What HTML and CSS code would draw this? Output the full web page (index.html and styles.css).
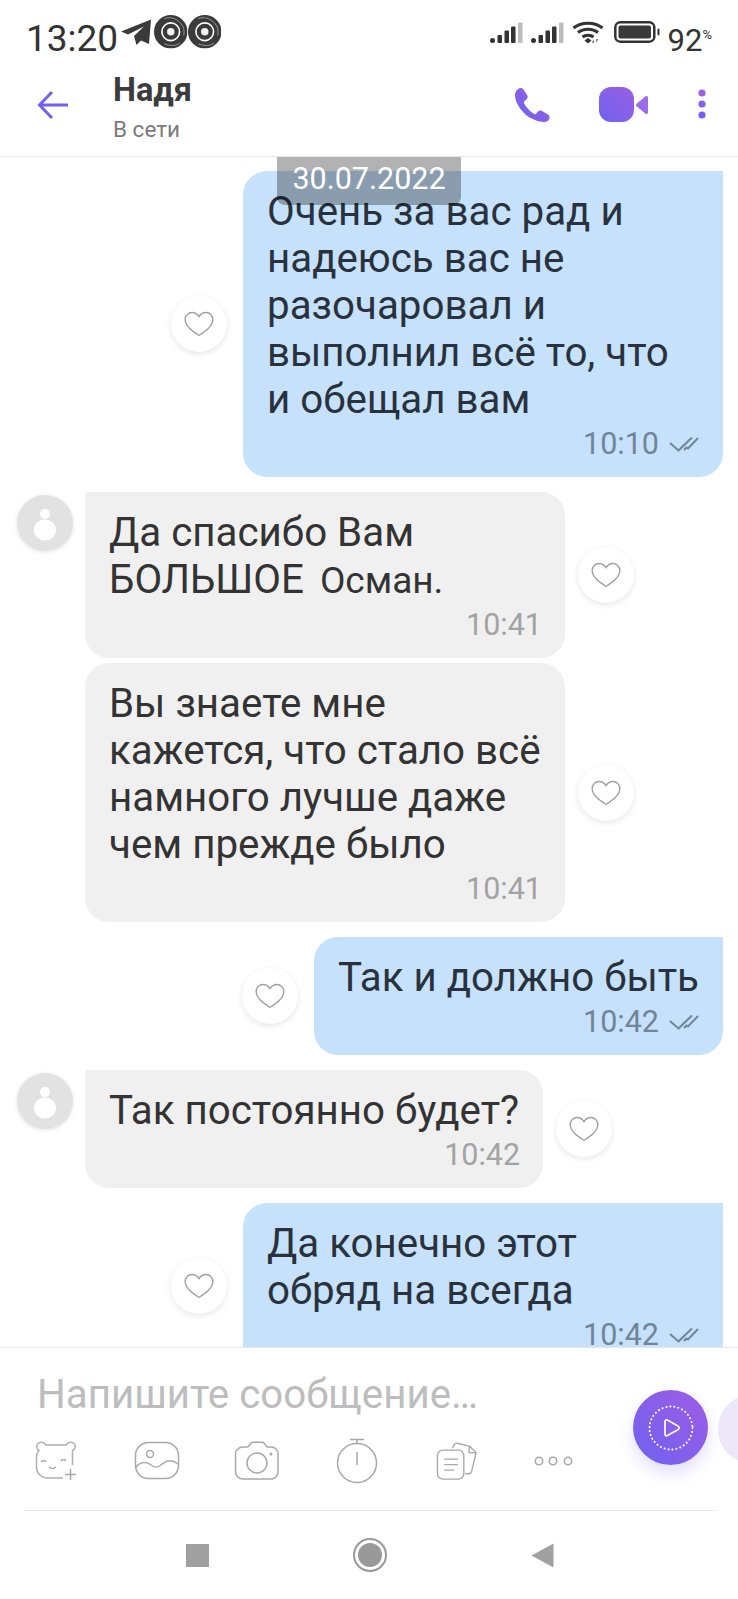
FILE: index.html
```html
<!DOCTYPE html>
<html lang="ru">
<head>
<meta charset="utf-8">
<title>Надя</title>
<link rel="stylesheet" href="styles.css">
</head>
<body>
<svg class="defs" width="0" height="0" aria-hidden="true">
  <defs>
    <linearGradient id="vio" x1="0" y1="1" x2="1" y2="0">
      <stop offset="0" stop-color="#6f62f0"/>
      <stop offset="1" stop-color="#9a5fe2"/>
    </linearGradient>
    <symbol id="heart" viewBox="0 0 30 26">
      <path d="M15 24.500C9 20.500 1.200 15.600 1.200 8.600 1.200 4.400 4.400 1.500 8 1.500c3 0 5.500 1.600 7 4.200 1.500-2.600 4-4.200 7-4.200 3.600 0 6.800 2.900 6.800 7.100C28.800 15.600 21 20.500 15 24.500Z" fill="none" stroke="#a0a0a0" stroke-width="1.400"/>
    </symbol>
    <symbol id="checks" viewBox="0 0 30 16">
      <path d="M1 7 9.500 14.500 15.500 8.500M9.500 14.500 23 1.500M15 14 17.500 11.500 19 12.500 29 2" fill="none" stroke="currentColor" stroke-width="2"/>
    </symbol>
    <symbol id="person" viewBox="0 0 56 56">
      <circle cx="28" cy="19" r="5" fill="#fff"/>
      <ellipse cx="28" cy="35" rx="11" ry="10.500" fill="#fff"/>
    </symbol>
    <symbol id="bars" viewBox="0 0 33 22">
      <circle cx="2.500" cy="18.500" r="2.500" fill="#333"/>
      <rect x="7.500" y="13" width="4.500" height="8" rx="1" fill="#333"/>
      <rect x="14.500" y="8.500" width="4.500" height="12.500" rx="1" fill="#333"/>
      <rect x="21" y="4.500" width="4.500" height="16.500" rx="1" fill="#333"/>
      <rect x="28" y="0.500" width="4.500" height="20.500" rx="1" fill="#bdbdbd"/>
    </symbol>
    <symbol id="ring" viewBox="0 0 36 36">
      <circle cx="18" cy="18" r="18" fill="#3a3a3a"/>
      <circle cx="18" cy="18" r="9.500" fill="none" stroke="#fff" stroke-width="1.800"/>
      <circle cx="18" cy="18" r="4" fill="#f2f2f2"/>
      <path d="M11 4c7-3 15 0 20 8 1.500 3 1.500 7 1 10M28 30c-5 4-12 3-17 1" fill="none" stroke="#b8b8b8" stroke-width="0.800"/>
    </symbol>
  </defs>
</svg>

<div class="phone">
  <div class="statusbar">
    <div class="status-left">
      <span class="clock">13:20</span>
      <svg class="tg" viewBox="0 0 32 28"><path d="M1 12.500 31 0.500 29 25 21 21.500 16.500 26 14 17 24 7.500 8 15.500Z" fill="#3a3a3a"/></svg>
      <svg class="ring"><use href="#ring"/></svg>
      <svg class="ring"><use href="#ring"/></svg>
    </div>
    <div class="status-right">
      <svg class="bars"><use href="#bars"/></svg>
      <svg class="bars"><use href="#bars"/></svg>
      <svg class="wifi" viewBox="0 0 32 24">
        <path d="M1.500 8C9 1.500 23 1.500 30.500 8M6 12.500c5.500-4.500 14.500-4.500 20 0M10.500 17c3-2.500 8-2.500 11 0" fill="none" stroke="#333" stroke-width="3"/>
        <path d="M12.500 20.500 16 18l3.500 2.500-3.500 3Z" fill="#333"/>
        <path d="M22 23v-4l-2.500 4ZM24 19v4l2.500-4Z" fill="#888"/>
      </svg>
      <svg class="battery" viewBox="0 0 46 22">
        <rect x="1.300" y="1.300" width="39" height="19.400" rx="5" fill="none" stroke="#333" stroke-width="2.500"/>
        <rect x="4.500" y="4.500" width="32.500" height="13" rx="2" fill="#3a3a3a"/>
        <rect x="43.500" y="7.500" width="2" height="7" rx="1" fill="#333"/>
      </svg>
      <span class="pct">92<small class="pct-sign">%</small></span>
    </div>
  </div>

  <header class="topbar">
    <svg class="back" viewBox="0 0 32 30"><path d="M31 15H3M15 2 2.500 15 15 28" fill="none" stroke="#7360f2" stroke-width="3"/></svg>
    <div class="contact">
      <div class="name">Надя</div>
      <div class="presence">В сети</div>
    </div>
    <svg class="phone-ic" viewBox="0 0 36 36"><path d="M5 1.500C3 2.500 1 4.500 1 8c0 6 4 13 9.500 18.500S25 35 30 35c3 0 5-1.500 5.500-4 .3-1.500-.3-2.800-1.500-3.500l-6-3.500c-1.500-.8-3-.5-4 .6l-1.800 2c-.6.6-1.300.7-2 .3-2.500-1.400-4.700-3.300-6.500-5.300-1.500-1.800-2.800-3.700-3.700-5.700-.3-.8 0-1.400.6-1.900l2-1.800c1.100-1 1.400-2.500.7-4L10.500 4C9.500 1.500 7 .5 5 1.500Z" fill="url(#vio)"/></svg>
    <svg class="video-ic" viewBox="0 0 50 36"><rect x="0" y="0" width="35" height="35" rx="12" fill="url(#vio)"/><path d="M38.500 18 47.500 10.500V25.500Z" fill="#9a6ce8" stroke="#9a6ce8" stroke-width="3" stroke-linejoin="round"/></svg>
    <svg class="more-ic" viewBox="0 0 8 30"><circle cx="4" cy="4" r="3.600" fill="#9a5fe2"/><circle cx="4" cy="15" r="3.600" fill="#7f60ec"/><circle cx="4" cy="26" r="3.600" fill="#7360f2"/></svg>
  </header>

  <main class="chat">
    <div class="date-badge">30.07.2022</div>

    <div class="row row-out">
      <span class="like like-out"><svg class="heart"><use href="#heart"/></svg></span>
      <div class="bubble bubble-out bubble-wide">
        <p class="text">Очень за вас рад и<br>надеюсь вас не<br>разочаровал и<br>выполнил всё то, что<br>и обещал вам</p>
        <div class="meta"><span>10:10</span><svg class="check"><use href="#checks"/></svg></div>
      </div>
    </div>

    <div class="row row-in gap-15">
      <span class="avatar"><svg class="person"><use href="#person"/></svg></span>
      <div class="bubble bubble-in bubble-wide bubble-first">
        <p class="text">Да спасибо Вам<br>БОЛЬШОЕ&nbsp;<span class="small-word">Осман.</span></p>
        <div class="meta"><span>10:41</span></div>
      </div>
      <span class="like like-in"><svg class="heart"><use href="#heart"/></svg></span>
    </div>

    <div class="row row-in gap-5">
      <span class="avatar avatar-empty"></span>
      <div class="bubble bubble-in bubble-wide">
        <p class="text">Вы знаете мне<br>кажется, что стало всё<br>намного лучше даже<br>чем прежде было</p>
        <div class="meta"><span>10:41</span></div>
      </div>
      <span class="like like-in"><svg class="heart"><use href="#heart"/></svg></span>
    </div>

    <div class="row row-out gap-15">
      <span class="like like-out"><svg class="heart"><use href="#heart"/></svg></span>
      <div class="bubble bubble-out">
        <p class="text">Так и должно быть</p>
        <div class="meta"><span>10:42</span><svg class="check"><use href="#checks"/></svg></div>
      </div>
    </div>

    <div class="row row-in gap-15">
      <span class="avatar"><svg class="person"><use href="#person"/></svg></span>
      <div class="bubble bubble-in bubble-first">
        <p class="text">Так постоянно будет?</p>
        <div class="meta"><span>10:42</span></div>
      </div>
      <span class="like like-in"><svg class="heart"><use href="#heart"/></svg></span>
    </div>

    <div class="row row-out gap-15">
      <span class="like like-out"><svg class="heart"><use href="#heart"/></svg></span>
      <div class="bubble bubble-out bubble-wide">
        <p class="text">Да конечно этот<br>обряд на всегда</p>
        <div class="meta"><span>10:42</span><svg class="check"><use href="#checks"/></svg></div>
      </div>
    </div>
  </main>

  <footer class="composer">
    <div class="placeholder">Напишите сообщение…</div>
    <div class="tools">
      <svg class="tool" viewBox="0 0 46 40">
        <path d="M38.500 24V9.500C41.500 8 42 5 40.500 3 38 0 34 1 32 4H12C10 1 6 0 3.500 3 2 5 2.500 8 5 9.500 3.500 11 2.500 13 2.500 15V26C2.500 32 7 37 14 37H29" fill="none" stroke="#b0b0b0" stroke-width="1.500"/>
        <path d="M7 21c1-2 4-2 5 0M27 20c1-2 4-2 5 0M15 26c2 2 5 2 7 0M36.500 28v11M31 33.500h11" fill="none" stroke="#a8a8a8" stroke-width="1.500"/>
      </svg>
      <svg class="tool" viewBox="0 0 46 40">
        <rect x="1.500" y="1.500" width="43" height="36" rx="13" fill="none" stroke="#a8a8a8" stroke-width="1.500"/>
        <circle cx="16" cy="13" r="3.500" fill="none" stroke="#a8a8a8" stroke-width="1.500"/>
        <path d="M2 26c4-5 10-6 15-2 4 3 7 3 11-1 5-4 11-4 16 0" fill="none" stroke="#a8a8a8" stroke-width="1.500"/>
      </svg>
      <svg class="tool" viewBox="0 0 46 40">
        <path d="M9 6h5l3-4c.5-.6 1-.8 2-.8h9c1 0 1.500.2 2 .8l3 4h4c4 0 7 3 7 7v18c0 4-3 7-7 7H9c-4 0-7.500-3-7.500-7V13C1.500 9 5 6 9 6Z" fill="none" stroke="#a8a8a8" stroke-width="1.500"/>
        <circle cx="23" cy="22" r="10" fill="none" stroke="#a8a8a8" stroke-width="1.500"/>
        <circle cx="37" cy="13" r="1.500" fill="#a8a8a8"/>
      </svg>
      <svg class="tool tool-timer" viewBox="0 0 46 46">
        <circle cx="23" cy="25" r="19.500" fill="none" stroke="#a8a8a8" stroke-width="1.500"/>
        <path d="M16 1.500h14M23 1.500v4M23 14v13" fill="none" stroke="#a8a8a8" stroke-width="1.500"/>
      </svg>
      <svg class="tool" viewBox="0 0 46 44">
        <rect x="1.500" y="10" width="29" height="32" rx="6" fill="none" stroke="#a8a8a8" stroke-width="1.500"/>
        <path d="M9 20h15M9 26h15M9 32h11" fill="none" stroke="#a8a8a8" stroke-width="1.500"/>
        <path d="M18 8l2-4c.8-1.500 2-2 3.500-1.500L37 6l7 6.500-5 21c-.4 1.500-1.500 2.500-3 2.500h-4M37 6l-1 6c0 .7.5 1 1 1l7-.5" fill="none" stroke="#a8a8a8" stroke-width="1.500"/>
      </svg>
      <svg class="tool tool-dots" viewBox="0 0 40 12">
        <circle cx="5" cy="6" r="3.700" fill="none" stroke="#a8a8a8" stroke-width="1.500"/>
        <circle cx="19" cy="6" r="3.700" fill="none" stroke="#a8a8a8" stroke-width="1.500"/>
        <circle cx="34" cy="6" r="3.700" fill="none" stroke="#a8a8a8" stroke-width="1.500"/>
      </svg>
    </div>
    <div class="send">
      <svg class="send-ic" viewBox="0 0 46 46">
        <circle cx="23" cy="23" r="21.500" fill="none" stroke="#fff" stroke-width="2" stroke-dasharray="0.100 3.900" stroke-linecap="round"/>
        <path d="M17 16.500c0-1.300 1.200-2 2.300-1.400l11 6.200c1.200.7 1.200 2.400 0 3.100l-11 6.200c-1.100.6-2.300-.1-2.300-1.400Z" fill="none" stroke="#fff" stroke-width="1.700"/>
      </svg>
    </div>
    <div class="send-ghost"></div>
  </footer>

  <nav class="navbar">
    <span class="nav-square"></span>
    <span class="nav-home"><span class="nav-home-dot"></span></span>
    <svg class="nav-back" viewBox="0 0 23 25"><path d="M22.500 0.500V24.500L0.500 12.500Z" fill="#a0a0a0"/></svg>
  </nav>
</div>
</body>
</html>
```
FILE: styles.css
```css
* { box-sizing: border-box; }
html, body { margin: 0; padding: 0; background: #fff; }
body { font-family: Roboto, "Liberation Sans", sans-serif; color: #333; }
.defs { position: absolute; }
.phone { width: 738px; height: 1599px; display: flex; flex-direction: column; overflow: hidden; }

/* status bar */
.statusbar { height: 70px; display: flex; justify-content: space-between; padding: 0 26px; flex: none; }
.status-left { display: flex; align-items: flex-start; }
.clock { font-size: 37px; line-height: 42px; margin-top: 18px; width: 94px; }
.tg { width: 32px; height: 28px; margin-top: 19px; }
.ring { width: 33.500px; height: 33.500px; margin-top: 15px; }
.tg + .ring { margin-left: 2px; }
.status-right { display: flex; align-items: flex-start; }
.bars { width: 33px; height: 22px; margin: 22px 8px 0 0; }
.wifi { width: 32px; height: 24px; margin: 20px 10px 0 0; }
.battery { width: 46px; height: 22px; margin: 21px 8px 0 0; }
.pct { font-size: 31px; line-height: 36px; margin-top: 17px; }
.pct-sign { font-size: 13px; vertical-align: 12px; }

/* top bar */
.topbar { height: 87px; flex: none; display: flex; align-items: flex-start; padding-left: 37px; border-bottom: 1px solid #e8e8e8; }
.back { width: 32px; height: 30px; margin-top: 20px; flex: none; }
.contact { margin-left: 44px; width: 401px; flex: none; margin-top: 2px; }
.name { font-size: 32.500px; line-height: 36px; font-weight: 700; color: #3c3c3c; }
.presence { font-size: 22.500px; line-height: 26px; color: #7b7b7b; margin-top: 8px; }
.phone-ic { width: 36px; height: 36px; margin: 17px 0 0 0; flex: none; }
.video-ic { width: 50px; height: 36px; margin: 17px 0 0 49px; flex: none; }
.more-ic { width: 8px; height: 30px; margin: 19px 0 0 49px; flex: none; }

/* chat */
.chat { position: relative; height: 1190px; flex: none; overflow: hidden; padding: 14px 15px 0 17px; display: flex; flex-direction: column; }
.date-badge { position: absolute; left: 277px; top: 0; width: 184px; height: 48px; background: rgba(0, 0, 0, 0.3); color: #fff; font-size: 30.500px; line-height: 44px; text-align: center; border-radius: 0 0 8px 8px; z-index: 2; }
.row { display: flex; align-items: center; flex: none; }
.row-out { justify-content: flex-end; }
.row-in { justify-content: flex-start; }
.gap-5 { margin-top: 5px; }
.gap-15 { margin-top: 15px; }

.bubble { padding: 17px 24px 13px; border-radius: 24px; flex: none; }
.bubble-wide { width: 480px; }
.bubble-out { background: #c6e1fb; border-top-right-radius: 0; color: #29323c; }
.bubble-in { background: #f0f0f0; }
.bubble-first { border-top-left-radius: 2px; }
.text { margin: 0; font-size: 40.300px; line-height: 47px; white-space: nowrap; }
.small-word { font-size: 37px; margin-left: 6px; }
.meta { height: 41px; display: flex; justify-content: flex-end; align-items: center; font-size: 30.500px; color: #a3a3a3; }
.bubble-in .meta { margin-right: -1px; }
.bubble-out .meta { color: #6f8599; }
.check { width: 30px; height: 16px; margin-left: 10px; }

.like { width: 56px; height: 56px; border-radius: 50%; background: #fff; box-shadow: 0 2px 6px rgba(0, 0, 0, 0.1); display: flex; align-items: center; justify-content: center; flex: none; }
.like-out { margin-right: 16px; }
.like-in { margin-left: 13px; }
.heart { width: 30px; height: 26px; }

.avatar { width: 56px; height: 56px; border-radius: 50%; background: #e2e2e2; box-shadow: 0 1px 4px rgba(0, 0, 0, 0.12); margin-right: 12px; flex: none; align-self: flex-start; margin-top: 3px; }
.avatar-empty { background: none; box-shadow: none; }
.person { width: 56px; height: 56px; display: block; }

/* composer */
.composer { position: relative; height: 164px; flex: none; border-top: 1px solid #e8e8e8; margin: 0; }
.placeholder { font-size: 40.300px; line-height: 44px; color: #bdbdbd; margin: 25px 0 0 37px; }
.tools { display: flex; align-items: flex-start; padding-left: 34px; margin-top: 24px; }
.tool { width: 46px; height: 40px; margin-right: 54px; flex: none; }
.tool-timer { height: 46px; margin-top: -3px; }
.tool-dots { width: 40px; height: 12px; margin-top: 14px; }
.composer::after { content: ""; position: absolute; left: 24px; right: 22px; bottom: 0; height: 1px; background: #e8e8e8; }
.send { position: absolute; left: 633px; top: 42px; width: 75px; height: 75px; border-radius: 50%; background: linear-gradient(45deg, #6f62f0, #9f5ce6); box-shadow: 0 8px 16px rgba(115, 96, 242, 0.2); display: flex; align-items: center; justify-content: center; }
.send-ic { width: 46px; height: 46px; }
.send-ghost { position: absolute; left: 718px; top: 46px; width: 70px; height: 70px; border-radius: 50%; background: #ebe7f9; }

/* nav */
.navbar { height: 88px; flex: none; display: flex; align-items: center; justify-content: center; gap: 144px; padding: 0 0 0 2px; }
.nav-square { width: 23px; height: 23px; background: #a0a0a0; }
.nav-home { width: 34px; height: 34px; border-radius: 50%; border: 2.500px solid #999; display: flex; align-items: center; justify-content: center; }
.nav-home-dot { width: 24px; height: 24px; border-radius: 50%; background: #999; }
.nav-back { width: 23px; height: 25px; }
```
